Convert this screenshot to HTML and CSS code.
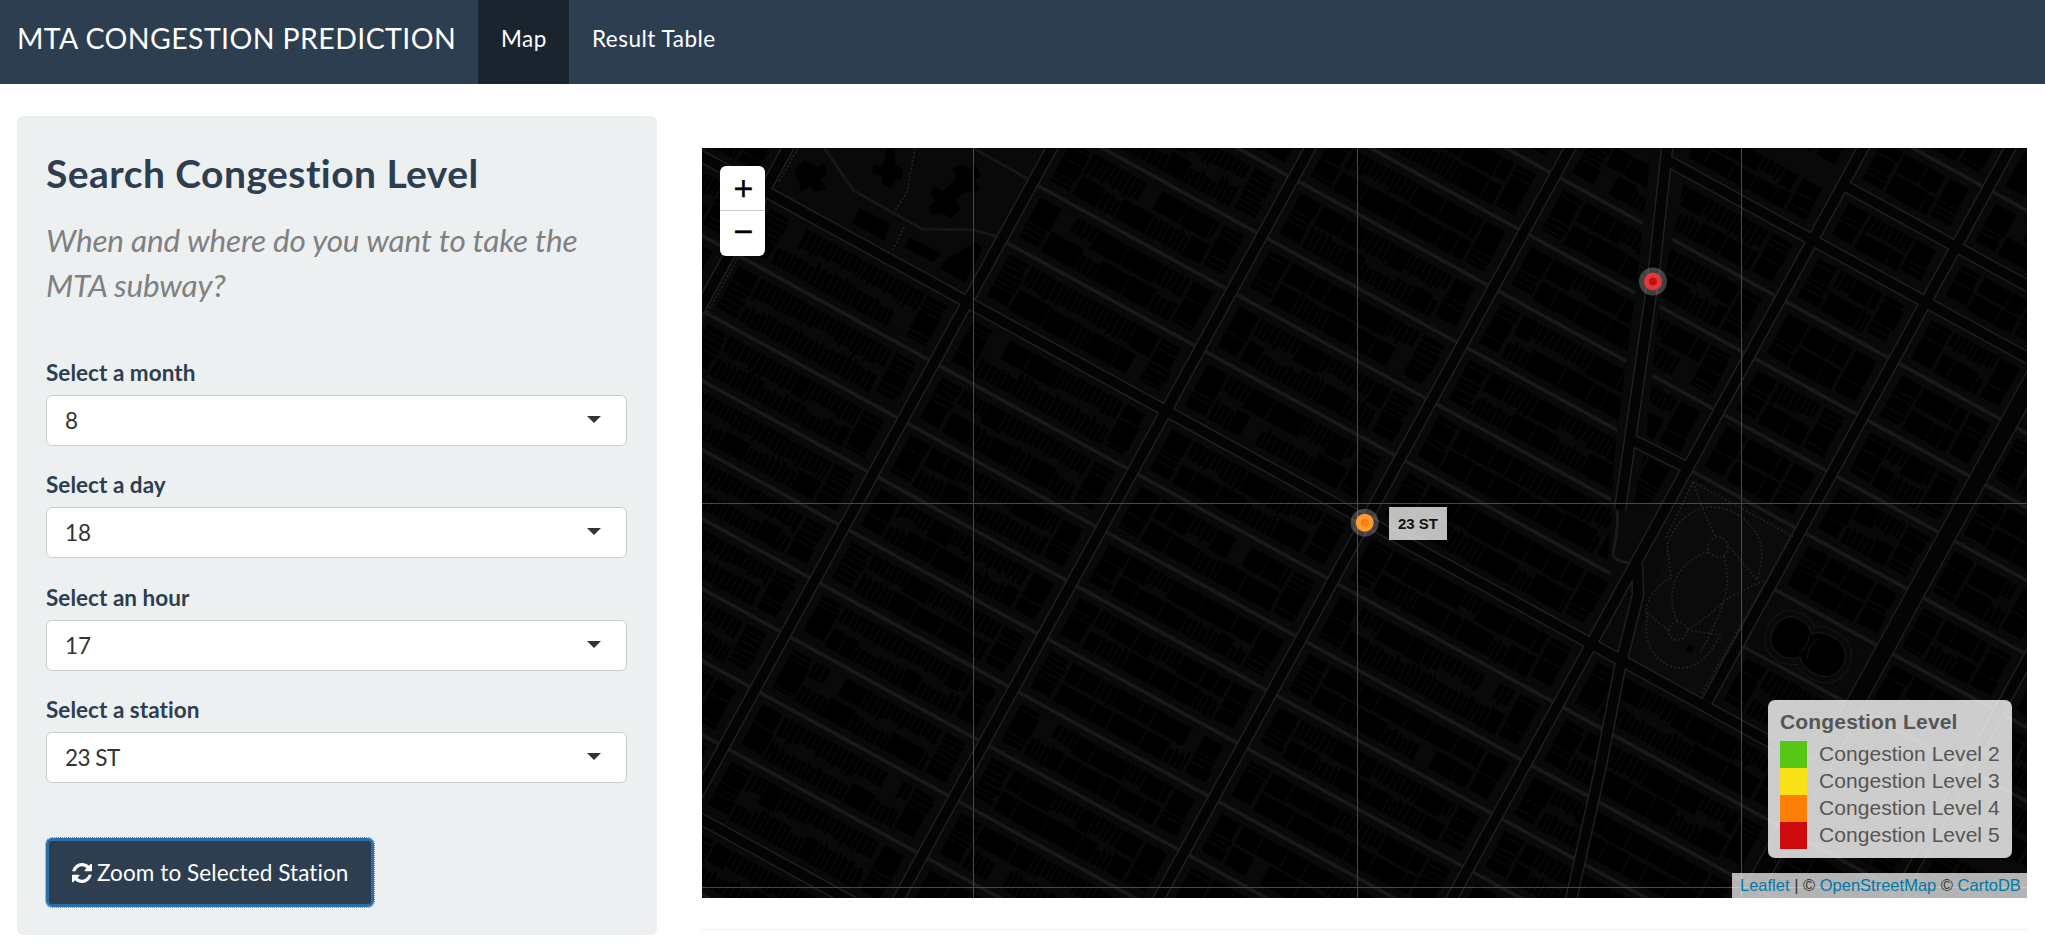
FILE: index.html
```html
<!DOCTYPE html>
<html lang="en">
<head>
<meta charset="utf-8">
<title>MTA Congestion Prediction</title>
<link rel="stylesheet" href="styles.css">
</head>
<body>
<nav class="navbar">
  <a class="brand">MTA CONGESTION PREDICTION</a>
  <a class="tab active">Map</a>
  <a class="tab">Result Table</a>
</nav>
<main class="layout">
  <aside class="well">
    <h3 class="title">Search Congestion Level</h3>
    <p class="lead">When and where do you want to take the MTA subway?</p>
    <div class="field"><label class="label">Select a month</label><div class="select"><span>8</span><i class="caret"></i></div></div>
    <div class="field"><label class="label">Select a day</label><div class="select"><span>18</span><i class="caret"></i></div></div>
    <div class="field"><label class="label">Select an hour</label><div class="select"><span>17</span><i class="caret"></i></div></div>
    <div class="field"><label class="label">Select a station</label><div class="select"><span class="station">23 ST</span><i class="caret"></i></div></div>
    <button class="button"><svg class="refresh" viewBox="0 0 1536 1536"><path fill="#fff" d="M1511 928q0 5-1 7-64 268-268 434.500T764 1536q-146 0-282.500-55T238 1324l-129 129q-19 19-45 19t-45-19-19-45V960q0-26 19-45t45-19h448q26 0 45 19t19 45-19 45l-137 137q71 66 161 102t187 36q134 0 250-65t186-179q11-17 53-117 8-23 30-23h192q13 0 22.500 9.500t9.500 22.500zM1536 128v448q0 26-19 45t-45 19h-448q-26 0-45-19t-19-45 19-45l138-138Q969 256 768 256q-134 0-250 65T332 500q-11 17-53 117-8 23-30 23H50q-13 0-22.500-9.500T18 608v-7q65-268 270-434.500T768 0q146 0 284 55.500T1297 212l130-129q19-19 45-19t45 19 19 45z"/></svg><span class="button-text">Zoom to Selected Station</span></button>
  </aside>
  <section class="content">
    <div class="map">
      <svg class="tiles" id="tiles" viewBox="702 148 1325 750"></svg>
      <div class="zoom"><a class="zoom-in">+</a><a class="zoom-out">−</a></div>
      <div class="tooltip">23 ST</div>
      <div class="legend">
        <strong class="legend-title">Congestion Level</strong>
        <div class="legend-row"><i class="swatch green"></i>Congestion Level 2</div>
        <div class="legend-row"><i class="swatch yellow"></i>Congestion Level 3</div>
        <div class="legend-row"><i class="swatch orange"></i>Congestion Level 4</div>
        <div class="legend-row"><i class="swatch red"></i>Congestion Level 5</div>
      </div>
      <div class="attribution"><a>Leaflet</a> | © <a>OpenStreetMap</a> © <a>CartoDB</a></div>
    </div>
    <hr class="rule">
  </section>
</main>
<script src="map.js"></script>
</body>
</html>
```
FILE: styles.css
```css
* { box-sizing: border-box; }
body { margin: 0; background: #fff; font-family: Lato, sans-serif; font-size: 22.5px; font-variant-ligatures: none; color: #2c3e50; height: 950px; overflow: hidden; }
.navbar { display: flex; height: 84px; background: #2c3e50; color: #fff; }
.brand { width: 478px; padding-left: 17px; font-size: 28.5px; letter-spacing: .4px; line-height: 77px; white-space: nowrap; }
.tab { padding: 0 23px; line-height: 77px; letter-spacing: .5px; white-space: nowrap; }
.tab.active { width: 91px; background: #1a242f; }
.layout { display: flex; align-items: flex-start; padding: 32px 18px 0 17px; }
.well { width: 640px; height: 819px; padding: 32px 30px 0 29px; background: #ecf0f1; border-radius: 6px; }
.title { margin: 0; font-size: 39px; line-height: 50px; letter-spacing: .44px; font-weight: 700; white-space: nowrap; }
.lead { margin: 20px 0 50px; width: 560px; font-size: 31.5px; line-height: 45px; letter-spacing: -.17px; font-style: italic; color: #808080; }
.field { height: 112.3px; }
.label { display: block; height: 37px; line-height: 29px; font-weight: 700; letter-spacing: .04px; white-space: nowrap; }
.select { display: flex; align-items: center; justify-content: space-between; height: 51px; padding: 0 25px 0 18px; background: #fff; border: 1.5px solid #ccc; border-radius: 6px; color: #333; }
.station { letter-spacing: -.5px; }
.caret { margin-bottom: 2px; border: 7px solid transparent; border-bottom-width: 0; border-top: 7px solid #333; }
.button { display: flex; align-items: center; gap: 5px; margin-top: 31px; width: 328px; height: 69px; padding: 0 0 0 23px; background: #2c3e50; border: 3px solid #2a6fac; border-radius: 6px; outline: 1px dotted #3a8fd8; outline-offset: 0; color: #fff; font: 22.5px Lato, sans-serif; font-variant-ligatures: none; letter-spacing: .1px; white-space: nowrap; }
.refresh { width: 20px; height: 20px; }
.content { width: 1325px; margin: 32px 0 0 45px; }
.map { position: relative; height: 750px; background: #080808; overflow: hidden; font-family: "Liberation Sans", Arial, sans-serif; }
.tiles { display: block; width: 1325px; height: 750px; }
.zoom { position: absolute; left: 18px; top: 18px; width: 45px; height: 90px; background: #fff; border-radius: 6px; color: #000; font: 400 26px "DejaVu Sans", sans-serif; -webkit-text-stroke: .6px #000; text-align: center; }
.zoom a { display: block; height: 45px; padding-left: 2px; }
.zoom a.zoom-in { border-bottom: 1.5px solid #ccc; line-height: 45px; }
.zoom a.zoom-out { line-height: 40px; }
.tooltip { position: absolute; left: 687px; top: 359px; width: 58px; height: 33px; background: rgba(255,255,255,.75); color: #111; font-size: 15px; font-weight: 700; line-height: 33px; text-align: center; white-space: nowrap; }
.legend { position: absolute; left: 1066px; top: 552px; width: 244px; height: 158px; padding: 9px 12px; border-radius: 7px; background: rgba(255,255,255,.8); color: #555; font-size: 21px; white-space: nowrap; }
.legend-title { display: block; height: 32px; line-height: 26px; letter-spacing: .16px; }
.legend-row { display: flex; height: 27px; gap: 12px; line-height: 26px; letter-spacing: .05px; }
.swatch { width: 27px; height: 27px; }
.green { background: #57c715; }
.yellow { background: #f9e118; }
.orange { background: #fb8005; }
.red { background: #cd0a0d; }
.attribution { position: absolute; right: 0; bottom: 0; width: 295px; height: 25px; padding-left: 8px; background: rgba(255,255,255,.7); color: #333; font-size: 16.5px; line-height: 24px; white-space: nowrap; }
.attribution a { color: #0078a8; }
.rule { margin: 31px 0 0; border: 0; border-top: 1.5px solid #eee; }
```
FILE: map.js
```js
// Street grid in rotated coordinates: u runs along the streets, v across them.
const TILT = 28.72;
const avenues = [532, 762, 993.5, 1220, 1448, 1705, 1834, 1965, 2095, 2225];
const streetC = [-1050, -975, -900, -825, -753, -677, -603, -530, -456, -383, -309, -228, -149, -74, -4, 65, 134, 204, 276, 350, 435, 510];
const wide = new Set([-825, -753, -228, 435]);
const streets = streetC.map(c => c * 0.877);
let seed = 7;
const rnd = () => (seed = (seed * 16807) % 2147483647) / 2147483647;
const r1 = n => Math.round(n * 10) / 10;
let lots = '';
const rect = (x, y, w, h) => { lots += `M${r1(x)} ${r1(y)}h${r1(w)}v${r1(h)}h${r1(-w)}z`; };

function fillBlock(u0, u1, v0, v1, coarse) {
  const h = v1 - v0, end = 24;
  // Lots facing the avenues at both ends of a block.
  [u0, u1 - end].forEach(x => {
    let y = v0;
    while (y < v1 - 3) {
      const s = Math.min(v1 - y, rnd() < 0.15 + coarse * 0.5 ? 12 + rnd() * 20 : 5 + rnd() * 2);
      rect(x, y, end - rnd() * 3, s - 1.3);
      y += s;
    }
  });
  // Two rows of back-to-back lots along the streets.
  [0, 1].forEach(side => {
    let x = u0 + end + 2;
    const stop = u1 - end - 2;
    while (x < stop - 3) {
      const roll = rnd();
      const big = roll < coarse;
      if (roll > 0.97) { x += 16; continue; }
      const run = big ? 1 : 3 + Math.floor(rnd() * 5);
      const base = h * (0.3 + rnd() * 0.13);
      for (let i = 0; i < run && x < stop - 3; i++) {
        const w = Math.min(stop - x, big ? 14 + rnd() * 26 : 5 + rnd() * 2);
        const d = big ? h * (0.44 + rnd() * 0.04) : base + rnd() * 2;
        rect(x, side ? v1 - d : v0, w - 1.3, d);
        if (!big && rnd() < 0.3) rect(x, side ? v1 - d - 3 : v0 + d - 1, (w - 1.4) / 2, 4);
        x += w;
      }
    }
  });
}

for (let i = 0; i < avenues.length - 1; i++) {
  for (let j = 0; j < streets.length - 1; j++) {
    const south = streetC[j] >= -228;
    if (i === 1 && !south) continue;
    if (i === 6 && south) continue;
    const right = i === 5 && south ? avenues[7] - 5 : avenues[i + 1];
    const u0 = avenues[i] + 14, v0 = streets[j] + (wide.has(streetC[j]) ? 13 : 9);
    const u1 = right - 14, v1 = streets[j + 1] - (wide.has(streetC[j + 1]) ? 13 : 9);
    fillBlock(u0, u1, v0, v1, i < 2 ? 0.14 : i < 3 ? 0.34 : i < 4 ? 0.6 : 0.66);
  }
}

const line = (x1, y1, x2, y2) => `M${x1} ${y1}L${x2} ${y2}`;
const thin = streetC.filter(c => !wide.has(c)).map(c => {
  const start = c < -610 ? 1250 : (c < -228 ? 993 : 532);
  return line(start, r1(c * 0.877), 2300, r1(c * 0.877));
}).join('');
const aves = avenues.map((u, i) => line(u, -1000, u, i === 6 ? -205 : 600)).join('');
const cross = [[-825, 1706], [-753, 1540], [-228, 532], [435, 532]].map(([c, u]) => line(u, c * 0.877, c === -228 ? 1965 : 2300, c * 0.877)).join('');
const broadway = 'M1668 140L1653 280L1630 440L1620 510';
const lower = 'M1637 565L1638 595L1620 667L1600 770L1571 900';
const arterial = (rot, flat, w, col) => `<g fill="none" stroke="${col}" stroke-width="${w}"><path transform="rotate(${TILT})" d="${rot}"/><path d="${flat}"/></g>`;
const disc = (x, y, halo, core) => `<circle cx="${x}" cy="${y}" r="14" fill="#fff" opacity=".24"/><circle cx="${x}" cy="${y}" r="9" fill="${halo}"/><circle cx="${x}" cy="${y}" r="4" fill="${core}"/>`;

document.getElementById('tiles').innerHTML = `
<rect x="702" y="148" width="1325" height="750" fill="#090909"/>
<g transform="rotate(${TILT})"><path d="${lots}" fill="#000"/><path d="${thin}" stroke="#090909" stroke-width="15"/><path d="${thin}" stroke="#191919" stroke-width="3.8"/></g>
<path d="M1682 140L1693 140L1660 300L1645 446L1632 515L1610 515L1616 440L1637 280L1652 140z" fill="#090909"/>
<path d="M1693 478L1797 534L1707 696L1702 698L1632 660L1642 570z" fill="#0b0b0b"/>
<path d="M1655 500L1690 480L1632 655L1590 640L1614 590L1608 560L1612 515z" fill="#090909"/>
${arterial(aves + cross, broadway + lower + 'M1632 440L1692 470', 12.6, '#212121')}
<path transform="rotate(${TILT})" d="M1965 -1000V600" stroke="#202020" stroke-width="19"/>
${arterial(aves + cross, broadway + lower + 'M1632 440L1692 470', 9.8, '#040404')}
<path transform="rotate(${TILT})" d="M1965 -1000V600" stroke="#040404" stroke-width="16.500"/>
<path d="M1617 510Q1618 515 1617 530L1613 555Q1616 562 1631 563" fill="none" stroke="#1a1a1a" stroke-width="3"/>
<g fill="none" stroke="#171717" stroke-width="3"><path d="M823 146L853 190L922 229L975 230L998 237M973 148L1028 179"/></g>
<g fill="none" stroke="#222" stroke-width="1.7" stroke-dasharray="2 2"><path d="M915 148L907 192L895 211M904 227L893 250M798 148L779 182M738 258L702 322"/>
<path d="M1693 482L1792 536L1702 693M1693 482L1665 540M1693 482L1703 510L1715 536"/><circle cx="1718" cy="547" r="10"/><circle cx="1678" cy="631" r="9"/>
<path d="M1708 552C1682 560 1671 580 1672 602Q1674 616 1678 622M1724 556C1729 578 1728 592 1720 612Q1714 628 1700 653M1669 631L1646 612Q1648 590 1671 578L1667 545Q1680 510 1710 507Q1740 507 1758 536Q1766 552 1757 580L1728 545M1648 612Q1640 652 1670 666Q1700 676 1720 635L1687 630Q1705 620 1725 600L1764 580"/></g>
<path d="M1688 645l6 2 -2 6 -6 -2z"/>
<g><path d="M804 160l13 7 7-4 3 13-6 3 5 10-11 3-5-6-9 6-2-11-5-10zM886 148h9v17l8 5-1 9-6-1-5 10-8-3-1-9-10-3 2-8 9 2zM961 164l7 5 8-3 5 9-6 5 5 8-5 5-8-2-12 9 5 9-9 10-8-6-11 2-3-9 7-5-6-8 5-6 9 4 12-13-4-9zM859 208l31 15-6 18-31-18zM909 237l32 17-8 8-29-15zM943 262l32-20 8 6-18 34-24-13z"/></g>
<g transform="translate(1809 647) rotate(28)"><rect x="-54" y="-29" width="108" height="58" fill="#090909"/><path d="M-40 0q2-20 18-20q14 0 18 8q4-8 20-8q20 0 23 20q-2 21-22 21q-14 0-20-8q-8 8-18 8q-18-2-19-21z" stroke="#191919"/><path d="M-46 0q2-26 24-26q14 0 18 6q4-6 20-6q26 0 29 26q-2 27-28 27q-14 0-20-6q-8 6-18 6q-24-2-25-27zM-6-11q6 10 0 22M4-11q-6 10 0 22" fill="none" stroke="#171717"/></g>
<path d="M973.500 148V898M1357.500 148V898M1741.500 148V898M702 503.500H2027M702 887.500H2027" stroke="#484848" stroke-width="1" fill="none"/>
${disc(1364.7, 522.7, '#fc9a35', '#fb8005')}${disc(1653, 281.5, '#dc3a3c', '#cd0a0d')}`;
```
